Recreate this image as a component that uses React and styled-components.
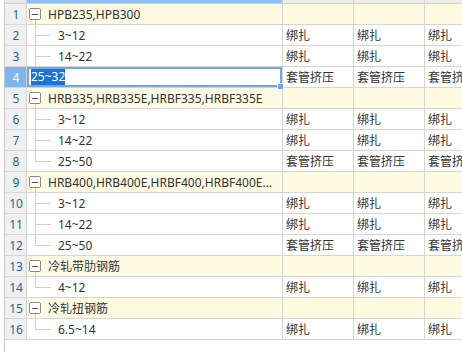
import styled, { createGlobalStyle, css } from "styled-components";

const GlobalStyle = createGlobalStyle`
  html, body {
    margin: 0;
    padding: 0;
    background: #ffffff;
  }
  body {
    font-family: "Noto Sans", "Noto Sans CJK SC", sans-serif;
    font-size: 12px;
    color: #333333;
  }
`;

const COLS = "22px 256px 71px 71px 71px";

const rows = [
  { kind: "group", label: "HPB235,HPB300" },
  { kind: "child", label: "3~12", method: "绑扎" },
  { kind: "child", label: "14~22", method: "绑扎" },
  { kind: "child", label: "25~32", method: "套管挤压", editing: true },
  { kind: "group", label: "HRB335,HRB335E,HRBF335,HRBF335E" },
  { kind: "child", label: "3~12", method: "绑扎" },
  { kind: "child", label: "14~22", method: "绑扎" },
  { kind: "child", label: "25~50", method: "套管挤压", last: true },
  { kind: "group", label: "HRB400,HRB400E,HRBF400,HRBF400E..." },
  { kind: "child", label: "3~12", method: "绑扎" },
  { kind: "child", label: "14~22", method: "绑扎" },
  { kind: "child", label: "25~50", method: "套管挤压", last: true },
  { kind: "group", label: "冷轧带肋钢筋" },
  { kind: "child", label: "4~12", method: "绑扎", last: true },
  { kind: "group", label: "冷轧扭钢筋" },
  { kind: "child", label: "6.5~14", method: "绑扎", last: true },
];

const Expander = () => (
  <TreeIcon width="12" height="20" viewBox="0 0 12 20">
    <rect x="0.5" y="4.5" width="11" height="11" rx="2" fill="#ffffff" stroke="#8c8c8c" />
    <line x1="3" y1="10.5" x2="9" y2="10.5" stroke="#555555" />
    <line x1="6.5" y1="16" x2="6.5" y2="20" stroke="#cfcfcf" />
  </TreeIcon>
);

const Connector = ({ last }) => (
  <TreeIcon width="22" height="20" viewBox="0 0 22 20">
    <line x1="6.5" y1="0" x2="6.5" y2={last ? 10.5 : 20} stroke="#cfcfcf" />
    <line x1="6.5" y1="10.5" x2="22" y2="10.5" stroke="#cfcfcf" />
  </TreeIcon>
);

const App = () => {
  return (
    <>
      <GlobalStyle />
      <Page>
        <Grid>
          <HeaderRow>
            <Corner />
            <HeadCell $active />
            <HeadCell />
            <HeadCell />
            <HeadCell />
          </HeaderRow>
          {rows.map((row, i) => {
            const group = row.kind === "group";
            return (
              <Row key={i}>
                <RowNum $selected={row.editing}>{i + 1}</RowNum>
                {row.editing ? (
                  <NameCell $editing>
                    <Selected>{row.label}</Selected>
                    <FillHandle />
                  </NameCell>
                ) : (
                  <NameCell $group={group}>
                    {group ? <Expander /> : <Connector last={row.last} />}
                    <Label>{row.label}</Label>
                  </NameCell>
                )}
                {[0, 1, 2].map((c) => (
                  <Cell key={c} $group={group}>
                    {group ? "" : row.method}
                  </Cell>
                ))}
              </Row>
            );
          })}
        </Grid>
      </Page>
    </>
  );
};

const Page = styled.div`
  width: 462px;
  height: 352px;
  overflow: hidden;
  padding-left: 4px;
  box-sizing: border-box;
`;

const Grid = styled.div`
  height: 100%;
  border-left: 1px solid #c8c8c8;
  display: flex;
  flex-direction: column;
  width: max-content;
`;

const HeaderRow = styled.div`
  display: grid;
  grid-template-columns: ${COLS};
  height: 4px;
  border-bottom: 1px solid #cfcfcf;
  box-sizing: border-box;
`;

const Corner = styled.div`
  background: #e9e9e9;
  border-right: 1px solid #d0d0d0;
`;

const HeadCell = styled.div`
  background: ${(p) => (p.$active ? "#8fc0f2" : "#ececec")};
  border-right: 1px solid #d0d0d0;
`;

const Row = styled.div`
  display: grid;
  grid-template-columns: ${COLS};
  height: 21px;
`;

const cellBase = css`
  box-sizing: border-box;
  border-right: 1px solid #d6d6d6;
  border-bottom: 1px solid #d6d6d6;
  display: flex;
  align-items: center;
  white-space: nowrap;
  overflow: hidden;
`;

const RowNum = styled.div`
  ${cellBase};
  justify-content: center;
  background: ${(p) => (p.$selected ? "#7fb5ec" : "#f0f0f0")};
  color: ${(p) => (p.$selected ? "#ffffff" : "#2f5f9e")};
  border-right-color: #d0d0d0;
  padding-left: 1px;
`;

const NameCell = styled.div`
  ${cellBase};
  padding-left: 2px;
  background: ${(p) => (p.$group ? "#fffbe3" : "#ffffff")};

  ${(p) =>
    p.$editing &&
    css`
      position: relative;
      overflow: visible;
      padding-left: 4px;
      box-shadow: inset 0 0 0 2px #6ea8ea;
      z-index: 1;
    `}
`;

const TreeIcon = styled.svg`
  flex: none;
  margin-right: 7px;
  shape-rendering: crispEdges;
`;

const Label = styled.span`
  overflow: hidden;
  text-overflow: ellipsis;
`;

const Selected = styled.span`
  background: #1a74d8;
  color: #ffffff;
  line-height: 16px;
`;

const FillHandle = styled.span`
  position: absolute;
  right: -2px;
  bottom: -3px;
  width: 5px;
  height: 5px;
  background: #6ea8ea;
  border: 1px solid #ffffff;
`;

const Cell = styled.div`
  ${cellBase};
  padding-left: 3px;
  background: ${(p) => (p.$group ? "#fffbe3" : "#ffffff")};
`;

export default App;
